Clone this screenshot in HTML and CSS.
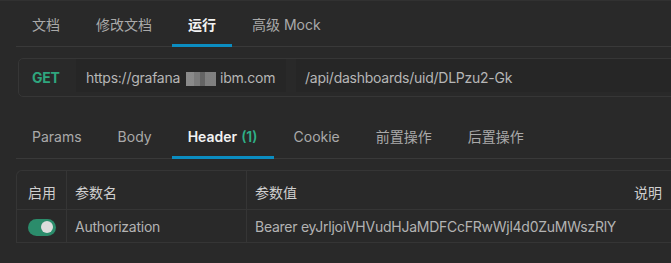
FILE: index.html
```html
<!DOCTYPE html>
<html lang="zh">
<head>
<meta charset="utf-8">
<link rel="stylesheet" href="styles.css">
</head>
<body>
<div class="page">
  <nav class="tabs top-tabs">
    <div class="tab">文档</div>
    <div class="tab">修改文档</div>
    <div class="tab active">运行</div>
    <div class="tab">高级 Mock</div>
  </nav>

  <div class="url-bar">
    <span class="method">GET</span>
    <div class="field host">https://grafana<span class="blur"></span>ibm.com</div>
    <div class="field path">/api/dashboards/uid/DLPzu2-Gk</div>
  </div>

  <nav class="tabs sub-tabs">
    <div class="tab">Params</div>
    <div class="tab">Body</div>
    <div class="tab active">Header <span class="count">(1)</span></div>
    <div class="tab">Cookie</div>
    <div class="tab">前置操作</div>
    <div class="tab">后置操作</div>
  </nav>

  <div class="table">
    <div class="cell head c-enable">启用</div>
    <div class="cell head">参数名</div>
    <div class="cell head">参数值</div>
    <div class="cell head c-desc">说明</div>

    <div class="cell c-enable"><span class="toggle"><span class="knob"></span></span></div>
    <div class="cell latin">Authorization</div>
    <div class="cell latin">Bearer eyJrljoiVHVudHJaMDFCcFRwWjl4d0ZuMWszRlY</div>
    <div class="cell c-desc"></div>
  </div>
</div>
</body>
</html>
```

FILE: styles.css
```css
html, body {
  margin: 0;
  padding: 0;
  background: #292929;
  overflow: hidden;
}

body {
  font-family: Inter, "Noto Sans CJK SC", sans-serif;
  font-size: 14px;
  color: #b4b4b4;
}

.latin,
.field,
.method {
  letter-spacing: -0.25px;
}

.page {
  width: 671px;
  height: 263px;
  border-top: 1px solid #313131;
  box-sizing: border-box;
}

.tabs {
  display: flex;
  gap: 4px;
  margin-left: 16px;
  height: 45px;
  border-bottom: 1px solid #393939;
}

.tab {
  display: flex;
  align-items: center;
  padding: 3px 16px 0;
  box-sizing: border-box;
  border-bottom: 3px solid transparent;
  margin-bottom: -1px;
  height: 46px;
  color: #a9a9a9;
  white-space: nowrap;
}

.tab.active {
  color: #f2f2f2;
  font-weight: 600;
  border-bottom-color: #0b8dc1;
}

.tab .count {
  color: #2fb088;
  margin-left: 4px;
}

.url-bar {
  display: flex;
  align-items: flex-start;
  margin: 11px -20px 0 18px;
  height: 39px;
  box-sizing: border-box;
  border: 1px solid #363636;
  border-radius: 5px;
}

.method {
  color: #2fa67e;
  font-weight: 700;
  width: 57px;
  padding-left: 13px;
  box-sizing: border-box;
  height: 37px;
  line-height: 37px;
  flex: none;
}

.field {
  height: 33px;
  line-height: 37px;
  background: #262626;
  color: #b6b6b6;
  display: flex;
  align-items: flex-start;
  white-space: nowrap;
}

.host {
  width: 210px;
  padding-left: 10px;
  box-sizing: border-box;
  margin-right: 10px;
}

.path {
  flex: 1;
  padding-left: 9px;
}

.blur {
  display: inline-block;
  width: 30px;
  height: 14px;
  margin: 13px 4px 0 6px;
  background:
    linear-gradient(90deg, #9c9c9c 0 8px, #8a8a8a 8px 14px, #6f6f6f 14px 19px, #8f8f8f 19px 30px);
  opacity: 0.85;
}

.sub-tabs {
  margin-top: 16px;
}

.table {
  display: grid;
  grid-template-columns: 50px 180px 1fr 60px;
  grid-template-rows: 39px 33px;
  margin: 11px -20px 0 16px;
  border-top: 1px solid #353535;
  border-left: 1px solid #353535;
  border-top-left-radius: 6px;
}

.cell {
  display: flex;
  align-items: center;
  padding-left: 8px;
  border-right: 1px solid #353535;
  border-bottom: 1px solid #353535;
  color: #b3b3b3;
  white-space: nowrap;
  overflow: visible;
}

.cell.head {
  color: #cfcfcf;
  padding-top: 3px;
}

.c-enable {
  padding-left: 11px;
}

.c-desc {
  justify-content: flex-end;
  padding-right: 28px;
}

.table .cell:nth-child(3),
.table .cell:nth-child(7) {
  border-right: none;
}

.toggle {
  display: inline-flex;
  align-items: center;
  justify-content: flex-end;
  width: 28px;
  height: 17px;
  border-radius: 9px;
  background: #2b8c6b;
  padding-right: 3px;
  box-sizing: border-box;
  margin-top: 2px;
}

.knob {
  width: 12px;
  height: 12px;
  border-radius: 50%;
  background: #dcdcdc;
}
```
